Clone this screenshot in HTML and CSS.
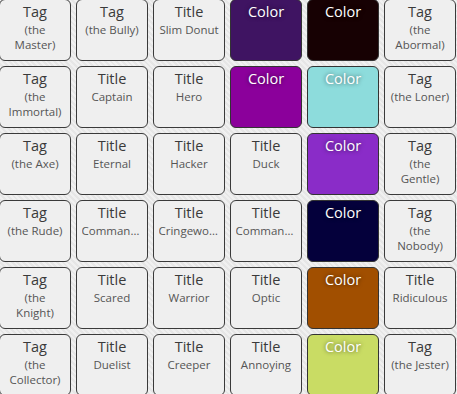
FILE: index.html
```html
<!DOCTYPE html>
<html lang="en">
<head>
    <meta charset="UTF-8">
    <meta name="viewport" content="width=device-width, initial-scale=1.0">
    <title>Tiles</title>
    <link rel="stylesheet" href="styles.css">
</head>
<body>
    <div class="grid">
        <div class="tile"><div class="kind">Tag</div><div class="value wrap">(the Master)</div></div>
        <div class="tile"><div class="kind">Tag</div><div class="value wrap">(the Bully)</div></div>
        <div class="tile"><div class="kind">Title</div><div class="value">Slim Donut</div></div>
        <div class="tile color" style="background-color: #3f1462;"><div class="kind">Color</div></div>
        <div class="tile color" style="background-color: #170103;"><div class="kind">Color</div></div>
        <div class="tile"><div class="kind">Tag</div><div class="value wrap">(the Abormal)</div></div>

        <div class="tile"><div class="kind">Tag</div><div class="value wrap">(the Immortal)</div></div>
        <div class="tile"><div class="kind">Title</div><div class="value">Captain</div></div>
        <div class="tile"><div class="kind">Title</div><div class="value">Hero</div></div>
        <div class="tile color" style="background-color: #8b009b;"><div class="kind">Color</div></div>
        <div class="tile color" style="background-color: #8ddcdc;"><div class="kind">Color</div></div>
        <div class="tile"><div class="kind">Tag</div><div class="value wrap">(the Loner)</div></div>

        <div class="tile"><div class="kind">Tag</div><div class="value wrap">(the Axe)</div></div>
        <div class="tile"><div class="kind">Title</div><div class="value">Eternal</div></div>
        <div class="tile"><div class="kind">Title</div><div class="value">Hacker</div></div>
        <div class="tile"><div class="kind">Title</div><div class="value">Duck</div></div>
        <div class="tile color" style="background-color: #8a2cc8;"><div class="kind">Color</div></div>
        <div class="tile"><div class="kind">Tag</div><div class="value wrap">(the Gentle)</div></div>

        <div class="tile"><div class="kind">Tag</div><div class="value wrap">(the Rude)</div></div>
        <div class="tile"><div class="kind">Title</div><div class="value">Commander</div></div>
        <div class="tile"><div class="kind">Title</div><div class="value">Cringeworthy</div></div>
        <div class="tile"><div class="kind">Title</div><div class="value">Commander</div></div>
        <div class="tile color" style="background-color: #04003b;"><div class="kind">Color</div></div>
        <div class="tile"><div class="kind">Tag</div><div class="value wrap">(the Nobody)</div></div>

        <div class="tile"><div class="kind">Tag</div><div class="value wrap">(the Knight)</div></div>
        <div class="tile"><div class="kind">Title</div><div class="value">Scared</div></div>
        <div class="tile"><div class="kind">Title</div><div class="value">Warrior</div></div>
        <div class="tile"><div class="kind">Title</div><div class="value">Optic</div></div>
        <div class="tile color" style="background-color: #a14f00;"><div class="kind">Color</div></div>
        <div class="tile"><div class="kind">Title</div><div class="value">Ridiculous</div></div>

        <div class="tile"><div class="kind">Tag</div><div class="value wrap">(the Collector)</div></div>
        <div class="tile"><div class="kind">Title</div><div class="value">Duelist</div></div>
        <div class="tile"><div class="kind">Title</div><div class="value">Creeper</div></div>
        <div class="tile"><div class="kind">Title</div><div class="value">Annoying</div></div>
        <div class="tile color" style="background-color: #c9dc64;"><div class="kind">Color</div></div>
        <div class="tile"><div class="kind">Tag</div><div class="value wrap">(the Jester)</div></div>
    </div>
</body>
</html>
```

FILE: styles.css
```css
* {
    margin: 0;
    padding: 0;
    box-sizing: border-box;
}
body {
    font-family: "Open Sans", sans-serif;
    color: #3a3a3a;
    background-color: #ececec;
    background-image: repeating-linear-gradient(45deg, #f0f0f0 0, #f0f0f0 2px, #e6e6e6 2px, #e6e6e6 4px);
    overflow: hidden;
}
.grid {
    display: grid;
    grid-template-columns: repeat(6, 72px);
    grid-auto-rows: 62px;
    gap: 5px;
    margin: -1px 0 0 -1px;
}
.tile {
    background-color: #efefef;
    border: 1.5px solid #3a3a3a;
    border-radius: 6px;
    text-align: center;
    padding: 2px 4.5px 0;
    overflow: hidden;
}
.kind {
    font-size: 14.5px;
    line-height: 20px;
}
.value {
    font-size: 11.5px;
    line-height: 15px;
    color: #555;
    white-space: nowrap;
    overflow: hidden;
    text-overflow: ellipsis;
}
.value.wrap {
    white-space: normal;
}
.color {
    border-color: #333;
}
.color .kind {
    color: #fff;
    font-weight: 500;
    text-shadow: 0 0 4px rgba(0, 0, 0, 0.6);
}
```
